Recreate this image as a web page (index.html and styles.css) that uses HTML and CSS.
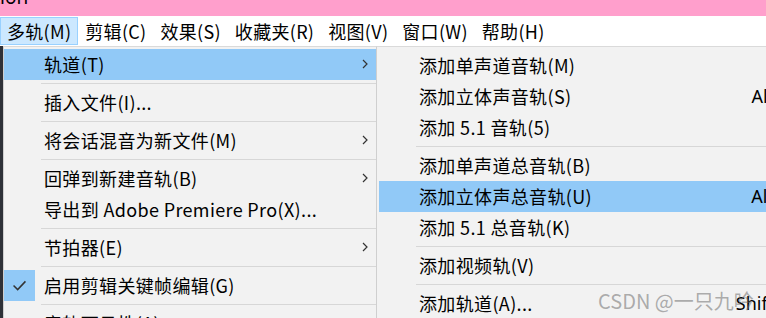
FILE: index.html
```html
<!DOCTYPE html>
<html lang="zh-CN">
<head>
<meta charset="utf-8">
<link rel="stylesheet" href="styles.css">
</head>
<body>
<div class="titlebar"><span class="title">Adobe Audition</span></div>
<div class="menubar">
  <span class="mb-item active">多轨(M)</span>
  <span class="mb-item">剪辑(C)</span>
  <span class="mb-item">效果(S)</span>
  <span class="mb-item">收藏夹(R)</span>
  <span class="mb-item">视图(V)</span>
  <span class="mb-item">窗口(W)</span>
  <span class="mb-item">帮助(H)</span>
</div>
<div class="workspace">
  <div class="menu main">
    <div class="item hl"><span class="label">轨道(T)</span><svg class="arrow" viewBox="0 0 6 10"><path d="M1 1 L5 5 L1 9" /></svg></div>
    <div class="sep"></div>
    <div class="item"><span class="label">插入文件(I)...</span></div>
    <div class="sep"></div>
    <div class="item"><span class="label">将会话混音为新文件(M)</span><svg class="arrow" viewBox="0 0 6 10"><path d="M1 1 L5 5 L1 9" /></svg></div>
    <div class="sep"></div>
    <div class="item"><span class="label">回弹到新建音轨(B)</span><svg class="arrow" viewBox="0 0 6 10"><path d="M1 1 L5 5 L1 9" /></svg></div>
    <div class="item"><span class="label">导出到 Adobe Premiere Pro(X)...</span></div>
    <div class="sep"></div>
    <div class="item"><span class="label">节拍器(E)</span><svg class="arrow" viewBox="0 0 6 10"><path d="M1 1 L5 5 L1 9" /></svg></div>
    <div class="sep"></div>
    <div class="item"><span class="check"><svg viewBox="0 0 16 12"><path d="M1.5 6 L6 10.5 L14.5 1.5" /></svg></span><span class="label">启用剪辑关键帧编辑(G)</span></div>
    <div class="sep"></div>
    <div class="item"><span class="label">音轨可见性(A)</span></div>
  </div>
  <div class="menu sub">
    <div class="item"><span class="label">添加单声道音轨(M)</span></div>
    <div class="item"><span class="label">添加立体声音轨(S)</span><span class="key">Alt+A</span></div>
    <div class="item"><span class="label">添加 5.1 音轨(5)</span></div>
    <div class="sep"></div>
    <div class="item"><span class="label">添加单声道总音轨(B)</span></div>
    <div class="item hl"><span class="label">添加立体声总音轨(U)</span><span class="key">Alt+B</span></div>
    <div class="item"><span class="label">添加 5.1 总音轨(K)</span></div>
    <div class="sep"></div>
    <div class="item"><span class="label">添加视频轨(V)</span></div>
    <div class="sep"></div>
    <div class="item"><span class="label">添加轨道(A)...</span><span class="key">Shift+A</span></div>
  </div>
  <div class="watermark">CSDN @一只九吟</div>
</div>
</body>
</html>
```
FILE: styles.css
```css
html, body {
  margin: 0;
  padding: 0;
  overflow: hidden;
  width: 766px;
  height: 318px;
}
body {
  font-family: "Noto Sans CJK SC", "Noto Sans", sans-serif;
  font-size: 18px;
  color: #000;
  background: #2e3138;
}
.titlebar {
  height: 16px;
  background: #ff9fcc;
  overflow: hidden;
}
.title {
  display: block;
  font-family: "Noto Sans", sans-serif;
  font-size: 19px;
  line-height: 20px;
  margin-top: -13px;
  margin-left: -110px;
  white-space: nowrap;
}
.menubar {
  height: 30px;
  background: #fff;
  display: flex;
  align-items: stretch;
}
.mb-item {
  display: flex;
  align-items: center;
  padding: 0 6px;
  margin: 1px 0;
  border: 1px solid transparent;
  line-height: 1;
  white-space: nowrap;
  letter-spacing: 0.3px;
}
.mb-item.active {
  background: #cce8ff;
  border-color: #99d1ff;
}
.workspace {
  position: relative;
  display: flex;
  align-items: flex-start;
  padding-left: 3px;
  height: 272px;
  overflow: hidden;
}
.menu {
  background: #f2f2f2;
  border-top: 1px solid #dadada;
  flex: none;
}
.menu.main {
  width: 372px;
  border-left: 1px solid #cfcfcf;
  border-right: 1px solid #cfcfcf;
  padding-top: 2px;
  height: 300px;
}
.menu.sub {
  width: 440px;
  padding: 3px 0 0 2px;
  height: 300px;
}
.item {
  position: relative;
  box-sizing: border-box;
  height: 31px;
  display: flex;
  align-items: center;
  padding: 0 8px 2px 40px;
  white-space: nowrap;
}
.item.hl {
  background: #91c9f7;
}
.label {
  line-height: 1;
  letter-spacing: 0.35px;
}
.arrow {
  margin-left: auto;
  width: 6px;
  height: 10px;
  fill: none;
  stroke: #333;
  stroke-width: 1.2;
}
.key {
  margin-left: auto;
  padding-right: 15px;
  line-height: 1;
  font-family: "Noto Sans", sans-serif;
}
.check {
  position: absolute;
  left: 0;
  top: 0;
  width: 31px;
  height: 31px;
  background: #91c9f7;
  display: flex;
  align-items: center;
  justify-content: center;
}
.check svg {
  width: 15px;
  height: 11px;
  fill: none;
  stroke: #333;
  stroke-width: 1.6;
}
.sep {
  height: 7px;
  margin-left: 37px;
  display: flex;
  align-items: center;
}
.sep::after {
  content: "";
  display: block;
  height: 1px;
  width: 100%;
  background: #d7d7d7;
}
.watermark {
  position: absolute;
  left: 598px;
  top: 245px;
  font-size: 20px;
  color: rgba(110, 110, 110, 0.55);
  white-space: nowrap;
  line-height: 1;
}
```
